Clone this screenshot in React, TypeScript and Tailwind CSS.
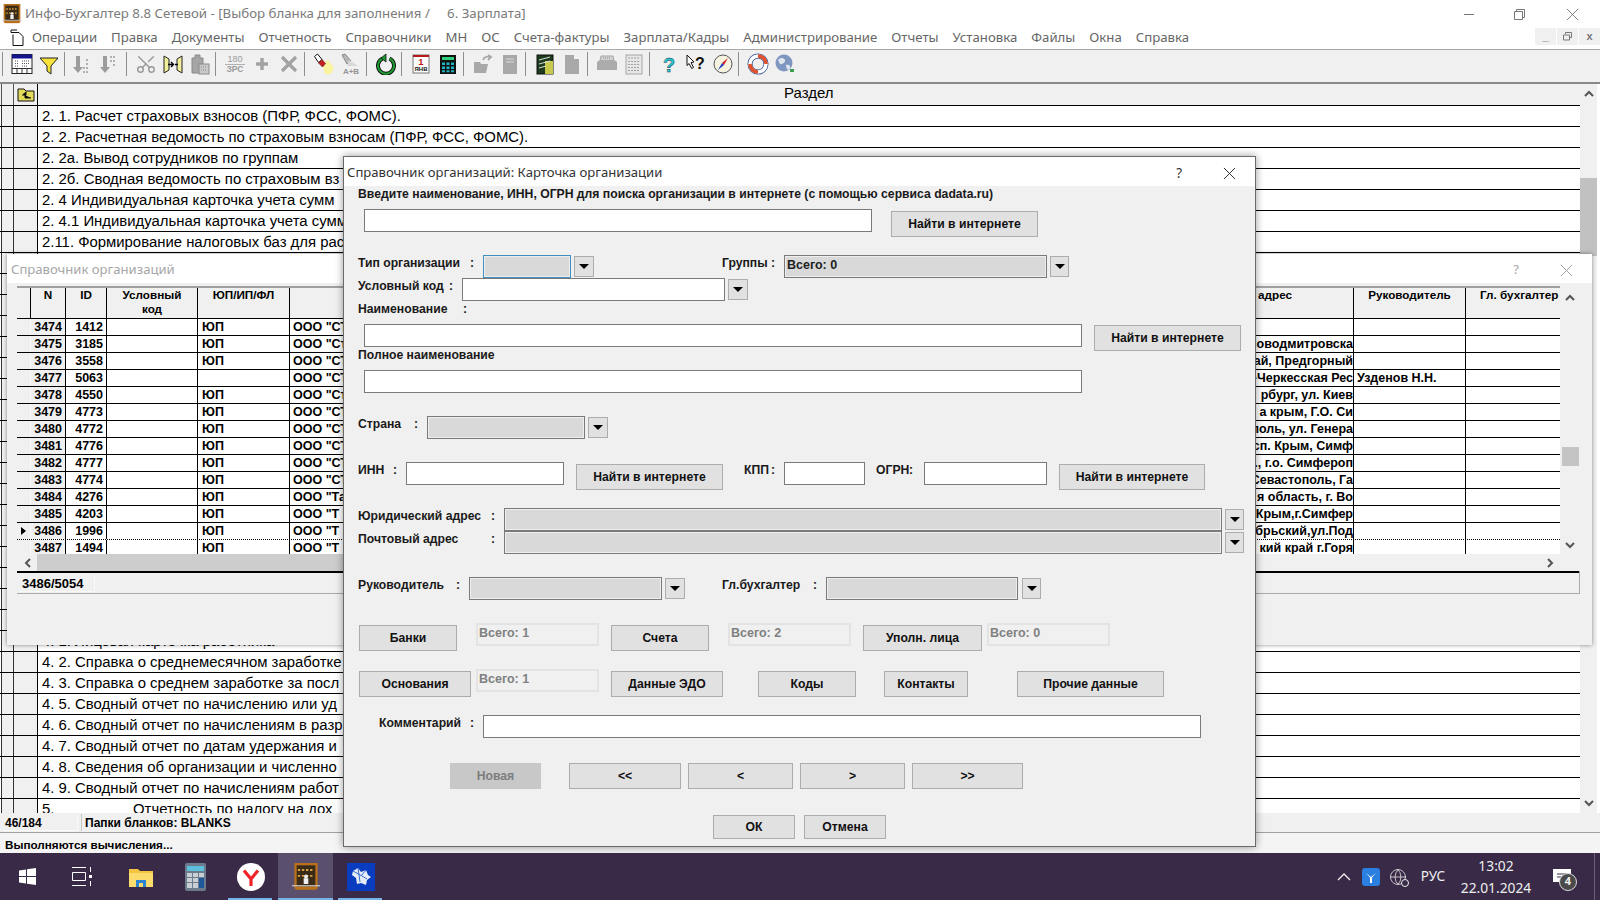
import React from "react";
import { Globe, Scissors } from "lucide-react";

type P = { c?: string; children?: React.ReactNode };

const Btn = ({ c = "", children }: P) => (
  <button className={`flex h-[26px] shrink-0 items-center justify-center border border-[#adadad] bg-[#e1e1e1] text-[12.2px] font-bold text-[#111] ${c}`}>
    {children}
  </button>
);
const Lbl = ({ c = "", children }: P) => (
  <div className={`h-[16px] shrink-0 whitespace-nowrap text-[12.2px] font-bold leading-[16px] text-[#1a1a1a] ${c}`}>{children}</div>
);
const Colon = ({ c = "w-[13px]" }: { c?: string }) => (
  <div className={`h-[16px] shrink-0 text-[12.2px] font-bold leading-[16px] text-[#1a1a1a] ${c}`}>:</div>
);
const Input = ({ c = "" }: P) => <div className={`h-[23px] shrink-0 border border-[#7a7a7a] bg-white ${c}`} />;
const Dis = ({ c = "", children }: P) => (
  <div className={`flex h-[23px] shrink-0 items-center border border-[#7a7a7a] bg-[#d9d9d9] pb-[2px] pl-[2px] text-[12.5px] font-bold text-[#222] shadow-[inset_0_0_0_1px_#eeeeee] ${c}`}>
    {children}
  </div>
);
const Drop = ({ c = "" }: P) => (
  <div className={`mt-[1px] flex h-[21px] shrink-0 items-center justify-center border border-[#adadad] bg-[#e1e1e1] ${c}`}>
    <div className="h-0 w-0 border-x-[5px] border-t-[5px] border-x-transparent border-t-black" />
  </div>
);
const Box = ({ c = "", children }: P) => (
  <div className={`h-[23px] shrink-0 border-2 border-[#e3e3e3] bg-[#f0f0f0] pl-[1px] text-[12.5px] font-bold leading-[17px] text-[#808080] ${c}`}>
    {children}
  </div>
);
const Row = ({ c = "", children }: P) => <div className={`flex h-[23px] shrink-0 items-start ${c}`}>{children}</div>;

const Sep = () => (
  <div className="flex h-[24px] w-[8px] shrink-0 pl-[2px]">
    <div className="h-full w-px bg-[#8e8e8e]" />
  </div>
);
const Ic = ({ children }: P) => (
  <div className="flex h-[24px] w-[27px] shrink-0 items-center justify-center">
    <svg width="22" height="22" viewBox="0 0 22 22">
      {children}
    </svg>
  </div>
);

const Abacus = ({ s }: { s: number }) => (
  <svg width={s} height={s} viewBox="0 0 24 24">
    <rect x="3" y="1" width="18" height="20" fill="#3a2a18" stroke="#b8701c" strokeWidth="2" />
    <path d="M5 6h14M5 11h14" stroke="#d9a040" strokeWidth="1.6" strokeDasharray="2 1.5" />
    <path d="M10 13h4v5h-4z" fill="#eeeeee" />
    <circle cx="12" cy="11.5" r="1.7" fill="#eee" />
    <path d="M0 19.5h24" stroke="#cfcfcf" strokeWidth="1" />
    <path d="M3 21h18v2H3z" fill="#b8701c" />
  </svg>
);

const tb: React.ReactNode[] = [
  <Sep key="s0" />,
  <Ic key="a">
    <rect x="1" y="1.5" width="20" height="19" fill="#fff" stroke="#222" />
    <rect x="1" y="1.5" width="20" height="4" fill="#14148c" />
    <path d="M1 15.5h20M6 15.5v5M11 15.5v5M16 15.5v5" stroke="#333" />
    <path d="M4 8h4M4 10.5h4M4 13h4M11 8h7M11 10.5h7M11 13h5" stroke="#555" strokeDasharray="1 1" />
  </Ic>,
  <Ic key="b">
    <path d="M2 5h18l-7 8v8l-4-3v-5z" fill="#f6e23a" stroke="#222" />
  </Ic>,
  <Sep key="s1" />,
  <Ic key="c">
    <g transform="translate(-5 0)">
      <path d="M8 3h4v11h3l-5 6-5-6h3z" fill="#9c9c9c" />
      <path d="M16 20v-2M19 20v-2M19 16v-2M16 16v-2M19 12v-2M19 8v-2" stroke="#9c9c9c" strokeWidth="1.5" />
    </g>
  </Ic>,
  <Ic key="d">
    <g transform="translate(-5 0)">
      <path d="M8 3h4v11h3l-5 6-5-6h3z" fill="#9c9c9c" />
      <path d="M16 3v2M19 3v2M16 7v2M19 7v2M19 11v2" stroke="#9c9c9c" strokeWidth="1.5" />
    </g>
  </Ic>,
  <Sep key="s2" />,
  <div key="e" className="flex h-[24px] w-[27px] shrink-0 items-center justify-center text-[#9a9a9a]">
    <Scissors size={22} strokeWidth={1.6} className="-rotate-90" />
  </div>,
  <Ic key="f">
    <path d="M2 3l5 3v11l-5 3z" fill="#f2ef9a" stroke="#222" />
    <path d="M20 3l-5 3v11l5 3z" fill="#f2ef9a" stroke="#222" />
    <path d="M6 11.5h5M9 9l2.5 2.5L9 14M16 11.5h-3" stroke="#000" strokeWidth="1.4" fill="none" />
  </Ic>,
  <Ic key="g">
    <path d="M3 5h3V2h5v3h3v15H3z" fill="#a5a5a5" stroke="#8a8a8a" />
    <rect x="10" y="11" width="10" height="10" fill="#c9c9c9" stroke="#8a8a8a" />
    <path d="M12 14h6M12 17h6" stroke="#8a8a8a" strokeDasharray="1 1" />
  </Ic>,
  <Sep key="s3" />,
  <Ic key="h">
    <text x="11" y="9" textAnchor="middle" fontSize="9" fill="#9a9a9a" fontFamily="Liberation Sans">180</text>
    <path d="M1 11.5h20" stroke="#b0b0b0" />
    <text x="11" y="19" textAnchor="middle" fontSize="8.5" fontWeight="700" fill="#9a9a9a" fontFamily="Liberation Sans">ЗРС</text>
  </Ic>,
  <Ic key="i">
    <path d="M11 5v12M5 11h12" stroke="#a2a2a2" strokeWidth="3.4" />
  </Ic>,
  <Ic key="j">
    <path d="M4 4l14 14M18 4L4 18" stroke="#a2a2a2" strokeWidth="3.2" />
  </Ic>,
  <Sep key="s4" />,
  <Ic key="k">
    <path d="M9 11l6-4 6 8-3 6h-6z" fill="#f8f4a0" />
    <path d="M1.5 3.5l3-2.5 4.5 5.5-3.5 3z" fill="#fff" stroke="#111" />
    <path d="M5.5 10l3.5-3.5 3.5 4-3 3.5z" fill="#c42020" stroke="#6a1010" strokeWidth=".6" />
  </Ic>,
  <Ic key="l">
    <path d="M2 2l3-1 6 7-4 3z" fill="#b8b8b8" stroke="#8a8a8a" />
    <path d="M9 7l9 6H7z" fill="#d8d8d8" />
    <text x="11" y="21" textAnchor="middle" fontSize="8" fontWeight="700" fill="#949494" fontFamily="Liberation Sans">A+B</text>
  </Ic>,
  <Sep key="s5" />,
  <Ic key="m">
    <path d="M7.5 5.5a8 8 0 1 0 7 0" fill="none" stroke="#111" strokeWidth="4" />
    <path d="M7.5 5.5a8 8 0 1 0 7 0" fill="none" stroke="#1e9a32" strokeWidth="2" />
    <path d="M11 1v8L6 5z" fill="#1e9a32" stroke="#111" strokeWidth=".8" />
  </Ic>,
  <Sep key="s6" />,
  <Ic key="n">
    <rect x="3" y="2" width="16" height="18" fill="#fff" stroke="#777" />
    <rect x="3" y="2" width="16" height="2" fill="#b81818" />
    <text x="11" y="12" textAnchor="middle" fontSize="9.5" fontWeight="700" fill="#c01818" fontFamily="Liberation Sans">1</text>
    <text x="11" y="18" textAnchor="middle" fontSize="6" fontWeight="700" fill="#111" fontFamily="Liberation Sans">ЯНВ</text>
  </Ic>,
  <Ic key="o">
    <rect x="3" y="2" width="16" height="19" fill="#111" />
    <rect x="5" y="4" width="12" height="3" fill="#2ad07a" />
    <path d="M5 9.5h3v2.5H5zM9.5 9.5h3v2.5h-3zM14 9.5h3v2.5h-3zM5 13.5h3V16H5zM9.5 13.5h3V16h-3zM14 13.5h3V16h-3zM5 17.2h3v2H5zM9.5 17.2h3v2h-3zM14 17.2h3v2h-3z" fill="#1fb6c4" />
  </Ic>,
  <Sep key="s7" />,
  <Ic key="p">
    <path d="M2 9h6l1 2h7l-2 9H2z" fill="#a8a8a8" />
    <path d="M11 7c1-3 4-4 7-3M16 2l3 2-3 3" fill="none" stroke="#a8a8a8" strokeWidth="1.8" />
  </Ic>,
  <Ic key="q">
    <path d="M4 2h14v19H4z" fill="#a8a8a8" />
    <path d="M7 6h8M7 9h8" stroke="#dcdcdc" strokeWidth="1.2" />
  </Ic>,
  <Sep key="s8" />,
  <Ic key="r">
    <rect x="3" y="2" width="16" height="19" fill="#1c3a1c" stroke="#111" />
    <path d="M11 8h8v13h-8z" fill="#c8c84a" />
    <path d="M5 7l11-3M5 11l11-3M5 15l7-2" stroke="#ddd" strokeWidth="1" />
  </Ic>,
  <Ic key="s">
    <path d="M4 2h9v4h5v15H4z" fill="#a8a8a8" />
  </Ic>,
  <Sep key="s9" />,
  <Ic key="t">
    <path d="M5 3h12l1 5H4z" fill="#d2d2d2" stroke="#a6a6a6" />
    <path d="M1 9l3-2h14l3 2v8H1z" fill="#ababab" />
    <path d="M7 5h8" stroke="#8f8f8f" strokeDasharray="1 1" />
  </Ic>,
  <Ic key="u">
    <rect x="3" y="2" width="16" height="19" fill="#e6e6e6" stroke="#a6a6a6" />
    <path d="M5 5h12M5 8.5h12M5 11.5h12M5 14.5h12M5 17.5h12" stroke="#a2a2a2" strokeDasharray="2 1" />
  </Ic>,
  <Sep key="s10" />,
  <Ic key="v">
    <text x="11" y="19" textAnchor="middle" fontSize="20" fontWeight="700" fill="#2cc4d0" stroke="#134" strokeWidth=".4" fontFamily="Liberation Sans">?</text>
  </Ic>,
  <Ic key="w">
    <path d="M2 2l7 7-3 .5 2.5 5-1.8 1-2.6-5L2 12.5z" fill="#fff" stroke="#111" />
    <text x="15" y="16" textAnchor="middle" fontSize="16" fontWeight="700" fill="#111" fontFamily="Liberation Sans">?</text>
  </Ic>,
  <Ic key="x">
    <circle cx="11" cy="11" r="9" fill="#f5f2e0" stroke="#555" />
    <path d="M16 5l-4 7-2-2z" fill="#d02020" />
    <path d="M6 17l4-7 2 2z" fill="#2040c0" />
  </Ic>,
  <Sep key="s11" />,
  <Ic key="y">
    <circle cx="11" cy="11" r="8" fill="none" stroke="#2b4a90" strokeWidth="5" />
    <circle cx="11" cy="11" r="8" fill="none" stroke="#fff" strokeWidth="3.6" />
    <path d="M11 3a8 8 0 0 1 8 8M11 19a8 8 0 0 1-8-8" fill="none" stroke="#e0502a" strokeWidth="3.6" />
  </Ic>,
  <Ic key="z">
    <circle cx="10" cy="10" r="8.5" fill="#7f96c0" />
    <path d="M4 7c3-3 6-2 7 0s-3 5-5 4zM12 12c2-1 5 0 4 3s-4 2-4-3z" fill="#dfe5ee" />
    <path d="M16 16h4v3h-4z" fill="#3aa050" />
  </Ic>,
];

const menu = ["Операции", "Правка", "Документы", "Отчетность", "Справочники", "МН", "ОС", "Счета-фактуры", "Зарплата/Кадры", "Администрирование", "Отчеты", "Установка", "Файлы", "Окна", "Справка"];

const mainRows: { [k: number]: string } = {
  0: "2. 1. Расчет страховых взносов (ПФР, ФСС, ФОМС).",
  1: "2. 2. Расчетная ведомость по страховым взносам (ПФР, ФСС, ФОМС).",
  2: "2. 2а. Вывод сотрудников по группам",
  3: "2. 2б. Сводная ведомость по страховым вз",
  4: "2. 4 Индивидуальная карточка учета сумм",
  5: "2. 4.1 Индивидуальная карточка учета сумм",
  6: "2.11. Формирование налоговых баз для рас",
  25: "4. 1. Лицевая карточка работника",
  26: "4. 2. Справка о среднемесячном заработке",
  27: "4. 3. Справка о среднем заработке за посл",
  28: "4. 5. Сводный отчет по начислению или уд",
  29: "4. 6. Сводный отчет по начислениям в разр",
  30: "4. 7. Сводный отчет по датам удержания и",
  31: "4. 8. Сведения об организации и численно",
  32: "4. 9. Сводный отчет по начислениям работ",
};

const org = [
  ["3474", "1412", "ЮП", 'ООО "СТ', "", ""],
  ["3475", "3185", "ЮП", 'ООО "Ст', "Новодмитровска", ""],
  ["3476", "3558", "ЮП", 'ООО "СТ', "ай, Предгорный", ""],
  ["3477", "5063", "", 'ООО "СТ', "-Черкесская Рес", "Узденов Н.Н."],
  ["3478", "4550", "ЮП", 'ООО "Ст', "рбург, ул. Киев", ""],
  ["3479", "4773", "ЮП", 'ООО "СТ', "а крым, Г.О. Си", ""],
  ["3480", "4772", "ЮП", 'ООО "СТ', "поль, ул. Генера", ""],
  ["3481", "4776", "ЮП", 'ООО "СТ', "сп. Крым, Симф", ""],
  ["3482", "4777", "ЮП", 'ООО "СТ', "., г.о. Симфероп", ""],
  ["3483", "4774", "ЮП", 'ООО "СТ', "Севастополь, Га", ""],
  ["3484", "4276", "ЮП", 'ООО "Та', "я область, г. Во", ""],
  ["3485", "4203", "ЮП", 'ООО "Т', "Крым,г.Симфер", ""],
  ["3486", "1996", "ЮП", 'ООО "Т', "ябрьский,ул.Под", ""],
  ["3487", "1494", "ЮП", 'ООО "Т', "кий край г.Горя", ""],
];

const cols = "grid grid-cols-[14px_35px_41px_91px_92px_510px_554px_112px_94px]";

const X = ({ s = 14, w = 1, col = "#777" }: { s?: number; w?: number; col?: string }) => (
  <svg width={s} height={s} viewBox="0 0 14 14">
    <path d="M1 1l12 12M13 1L1 13" stroke={col} strokeWidth={w} />
  </svg>
);
const Chev = ({ up }: { up?: boolean }) => (
  <svg width="10" height="7" viewBox="0 0 10 7">
    <path d={up ? "M1 6l4-4 4 4" : "M1 1l4 4 4-4"} fill="none" stroke="#555" strokeWidth="2" />
  </svg>
);

export default function App() {
  return (
    <div className="relative flex h-[900px] w-[1600px] flex-col overflow-hidden bg-white font-['Liberation_Sans',sans-serif] text-black">
      {/* title bar */}
      <div className="flex h-[28px] shrink-0 items-center bg-white pl-[2px] pr-[21px] font-['Noto_Sans',sans-serif] text-[13.25px] text-[#7b7b7b]">
        <Abacus s={20} />
        <span className="ml-[3px] whitespace-pre">Инфо-Бухгалтер 8.8 Сетевой - [Выбор бланка для заполнения /     6. Зарплата]</span>
        <div className="ml-auto flex items-center">
          <div className="h-px w-[10px] bg-[#777]" />
          <svg width="11" height="11" viewBox="0 0 11 11" className="ml-[40px]">
            <path d="M2.5 2.5V.5h8v8h-2M.5 2.5h8v8h-8z" fill="none" stroke="#777" />
          </svg>
          <div className="ml-[41px]">
            <X s={13} />
          </div>
        </div>
      </div>
      {/* menu */}
      <div className="flex h-[22px] shrink-0 items-start border-b border-[#a8a8a8] bg-white">
        <svg width="14" height="17" viewBox="0 0 14 17" className="ml-[10px] mt-[1px]">
          <path d="M1 3.5h8l4 4v9H3V5.5" fill="#fff" stroke="#111" />
          <path d="M1 3.5V1h6" fill="none" stroke="#111" />
        </svg>
        <div className="ml-[8px] flex gap-[14px] font-['Noto_Sans',sans-serif] text-[13.2px] leading-[19px] text-[#666]">
          {menu.map((m) => (
            <span key={m}>{m}</span>
          ))}
        </div>
        <div className="ml-auto flex">
          {["_", "", "x"].map((g, i) => (
            <div key={i} className="ml-px flex h-[17px] w-[21px] items-center justify-center bg-[#f0f0f0] text-[11px] font-bold leading-none text-[#777]">
              {i === 1 ? (
                <svg width="9" height="9" viewBox="0 0 9 9">
                  <path d="M2.5 2V.5h6v5H7M.5 3h6v5h-6z" fill="none" stroke="#777" />
                </svg>
              ) : (
                g
              )}
            </div>
          ))}
        </div>
      </div>
      {/* toolbar */}
      <div className="flex h-[34px] shrink-0 items-start border-b-2 border-[#8a8a8a] bg-[#f0f0f0] pt-[2px]">{tb}</div>
      {/* main table */}
      <div className="flex min-h-0 flex-1">
        <div className="flex w-[1580px] shrink-0 flex-col overflow-hidden">
          <div className="flex h-[22px] shrink-0 border-b border-black bg-[#f0f0f0]">
            <div className="ml-[1px] w-[13px] shrink-0 border-x border-[#555]" />
            <div className="flex w-[24px] shrink-0 items-center justify-center border-r border-black">
              <svg width="18" height="15" viewBox="0 0 18 15">
                <path d="M1 14V2h6l2 2h8v10z" fill="#e2da5a" stroke="#111" />
                <path d="M9 5L5.5 8 9 8zM8 8v3h6" fill="#111" stroke="#111" />
              </svg>
            </div>
            <div className="flex-1 pl-[746px] text-[15px] leading-[17px]">Раздел</div>
          </div>
          {Array.from({ length: 34 }, (_, i) => (
            <div key={i} className="flex h-[21px] shrink-0 border-b border-black bg-white">
              <div className="ml-[1px] w-[13px] shrink-0 border-x border-[#333] bg-[#f0f0f0]" />
              <div className="w-[24px] shrink-0 border-r border-black bg-[#f0f0f0]" />
              {i === 33 ? (
                <div className="flex whitespace-nowrap text-[14.9px] leading-[20px]">
                  <span className="w-[95px] shrink-0 pl-[4px]">5.</span>
                  <span>Отчетность по налогу на дох</span>
                </div>
              ) : (
                <div className="whitespace-nowrap pl-[4px] text-[14.9px] leading-[20px]">{mainRows[i] ?? ""}</div>
              )}
            </div>
          ))}
        </div>
        <div className="flex w-[17px] shrink-0 flex-col items-center bg-[#f0f0f0] pb-[6px]">
          <div className="mt-[6px]">
            <Chev up />
          </div>
          <div className="mt-[81px] h-[78px] w-full bg-[#c1c1c1]" />
          <div className="mt-auto">
            <Chev />
          </div>
        </div>
      </div>
      {/* status */}
      <div className="flex h-[20px] shrink-0 items-end border-b border-[#a0a0a0] bg-[#f0f0f0] pb-[1px] text-[12px] font-bold">
        <div className="ml-[4px] h-[17px] w-[74px] border-b border-r border-[#fafafa] pl-[1px] leading-[19px]">46/184</div>
        <div className="ml-[3px] h-[17px] flex-1 border-l border-[#c8c8c8] pl-[3px] leading-[19px]">Папки бланков: BLANKS</div>
      </div>
      <div className="flex h-[20px] shrink-0 items-center bg-[#f4f4f4] pl-[5px] pt-[3px] text-[11.7px] font-bold">Выполняются вычисления...</div>
      {/* taskbar */}
      <div className="flex h-[47px] shrink-0 items-center bg-[#392b47] font-['Noto_Sans',sans-serif] text-[#eeeeee]">
        <div className="flex h-full w-[55px] items-center justify-center">
          <svg width="17" height="17" viewBox="0 0 17 17">
            <path d="M0 2.5l7-1v6.5H0zM8 1.3L17 0v8H8zM0 9h7v6.5l-7-1zM8 9h9v8l-9-1.3z" fill="#fff" />
          </svg>
        </div>
        <div className="flex h-full w-[55px] items-center justify-center">
          <svg width="21" height="19" viewBox="0 0 21 19">
            <path d="M0 .5h14M0 18.5h14M.5 5.5h13v8H.5zM18.5 0v5M18.5 14v5" fill="none" stroke="#fff" />
            <rect x="17" y="8" width="3" height="3" fill="#fff" />
          </svg>
        </div>
        <div className="ml-[3px] flex h-full w-[55px] items-center justify-center">
          <svg width="26" height="22" viewBox="0 0 26 22">
            <path d="M1 3h9l2 2h13v16H1z" fill="#f4c33f" />
            <path d="M1 7h24v14H1z" fill="#fadb6c" />
            <path d="M8 21v-7h10v7h-3v-4h-4v4z" fill="#2a84d2" />
          </svg>
        </div>
        <div className="flex h-full w-[55px] items-center justify-center">
          <svg width="21" height="28" viewBox="0 0 21 28">
            <rect width="21" height="28" rx="2" fill="#6c7c8c" />
            <rect x="2" y="3" width="17" height="5" fill="#5cc0dc" />
            <path d="M2 10h5v4H2zM8 10h5v4H8zM2 15h5v4H2zM8 15h5v4H8zM2 20h5v5H2zM8 20h5v5H8z" fill="#c8d0d6" />
            <path d="M14 10h5v4h-5z" fill="#c8d0d6" />
            <path d="M14 15h5v10h-5z" fill="#1e5a9a" />
          </svg>
        </div>
        <div className="relative flex h-full w-[55px] items-center justify-center">
          <svg width="28" height="28" viewBox="0 0 28 28">
            <circle cx="14" cy="14" r="14" fill="#fff" />
            <path d="M7 7.5l7 8.5 7-8.5M14 16v7" fill="none" stroke="#f0232a" strokeWidth="3.2" />
          </svg>
          <div className="absolute bottom-0 left-[5px] h-[2px] w-[44px] bg-[#76b5e8]" />
        </div>
        <div className="relative flex h-full w-[55px] items-center justify-center bg-[#5a4f6c]">
          <Abacus s={28} />
          <div className="absolute bottom-0 left-0 h-[2px] w-full bg-[#76b5e8]" />
        </div>
        <div className="relative flex h-full w-[55px] items-center justify-center">
          <svg width="28" height="28" viewBox="0 0 28 28">
            <rect width="28" height="28" fill="#0a3cc0" />
            <path d="M6 8l5-3 3 4 5-2 2 5 3 2-4 3-1 5-5-2-4 1-1-6-4-3z" fill="#e4ecf8" />
            <path d="M11 5l2 14M6 8l9 5 5 3M19 7l-5 6" stroke="#3a6ad0" fill="none" />
          </svg>
          <div className="absolute bottom-0 left-[5px] h-[2px] w-[44px] bg-[#76b5e8]" />
        </div>
        <div className="ml-auto flex h-full items-center">
          <div className="flex w-[27px] justify-center">
            <svg width="14" height="8" viewBox="0 0 14 8">
              <path d="M1 7l6-6 6 6" fill="none" stroke="#eee" strokeWidth="1.3" />
            </svg>
          </div>
          <div className="flex w-[27px] justify-center">
            <svg width="18" height="18" viewBox="0 0 18 18">
              <rect width="18" height="18" rx="3" fill="#2a7fe0" />
              <path d="M4 5l5 4 5-4-4 4.5V15H8V9.5z" fill="#fff" />
            </svg>
          </div>
          <div className="relative flex w-[27px] justify-center">
            <Globe size={18} strokeWidth={1} />
            <div className="absolute bottom-[-1px] right-[2px] h-[8px] w-[8px] rounded-full border border-[#eee] bg-[#392b47]" />
          </div>
          <div className="ml-[4px] w-[36px] text-center text-[13.5px]">РУС</div>
          <div className="ml-[4px] flex w-[82px] flex-col items-center text-[13.8px] leading-[22px]">
            <span>13:02</span>
            <span>22.01.2024</span>
          </div>
          <div className="relative ml-[13px] flex w-[24px] justify-center">
            <svg width="18" height="16" viewBox="0 0 18 16">
              <path d="M0 0h18v13H0z" fill="#fff" />
              <path d="M4 5h10M4 8h10" stroke="#392b47" />
            </svg>
            <div className="absolute left-[9px] top-[4px] flex h-[18px] w-[18px] items-center justify-center rounded-full border border-[#ddd] bg-[#4a4a4a] text-[11px] font-bold">4</div>
          </div>
          <div className="ml-[20px] mr-[5px] h-full w-px bg-[#6a5f78]" />
        </div>
      </div>

      {/* back window */}
      <div className="absolute left-[7px] top-[254px] flex h-[391px] w-[1585px] flex-col bg-[#f0f0f0] shadow-[0_0_4px_rgba(0,0,0,0.45)]">
        <div className="flex h-[29px] shrink-0 items-center bg-white pl-[4px] pr-[19px] pt-[3px] font-['Noto_Sans',sans-serif] text-[13.1px] text-[#a6a6a6]">
          <span>Справочник организаций</span>
          <span className="ml-auto text-[13px]">?</span>
          <div className="ml-[41px]">
            <X s={13} col="#999" />
          </div>
        </div>
        <div className="ml-[10px] mt-[3px] flex h-[308px] w-[1563px] flex-col border-b border-r border-[#aaa]">
          <div className="flex h-[287px] border-b-2 border-black">
            <div className="flex w-[1543px] shrink-0 flex-col text-[12.5px] font-bold">
              <div className={`${cols} h-[33px] shrink-0 border-b border-black border-t-2 border-t-[#a0a0a0] bg-[#f0f0f0] text-[11.7px] leading-[14px]`}>
                <div className="border-r border-black" />
                <div className="border-r border-black text-center">N</div>
                <div className="border-r border-black text-center">ID</div>
                <div className="border-r border-black text-center">
                  Условный
                  <br />
                  код
                </div>
                <div className="border-r border-black text-center">ЮП/ИП/ФЛ</div>
                <div />
                <div className="border-r border-black pr-[61px] text-right">адрес</div>
                <div className="border-r border-black text-center">Руководитель</div>
                <div className="whitespace-nowrap pl-[14px]">Гл. бухгалтер</div>
              </div>
              <div className="h-[236px] overflow-hidden bg-white">
                {org.map((r) => {
                  const foc = r[0] === "3486";
                  return (
                    <div key={r[0]} className={`${cols} h-[17px] border-b leading-[16px] ${foc ? "border-dotted border-black" : "border-black"}`}>
                      <div className="flex items-center justify-center border-r border-[#f8f8f8] bg-[#f0f0f0]">
                        {foc && <div className="h-0 w-0 border-y-[4px] border-l-[5px] border-y-transparent border-l-black" />}
                      </div>
                      <div className="border-r border-black bg-[#f0f0f0] pr-[3px] text-right">{r[0]}</div>
                      <div className="border-r border-black pr-[3px] text-right">{r[1]}</div>
                      <div className="border-r border-black" />
                      <div className="border-r border-black pl-[4px]">{r[2]}</div>
                      <div className="whitespace-nowrap pl-[3px]">{r[3]}</div>
                      <div className="flex justify-end whitespace-nowrap border-r border-black">{r[4]}</div>
                      <div className="whitespace-nowrap border-r border-black pl-[3px]">{r[5]}</div>
                      <div />
                    </div>
                  );
                })}
              </div>
              <div className="flex h-[17px] items-center bg-[#f0f0f0]">
                <div className="flex w-[20px] justify-center">
                  <svg width="7" height="10" viewBox="0 0 7 10">
                    <path d="M6 1L2 5l4 4" fill="none" stroke="#555" strokeWidth="2" />
                  </svg>
                </div>
                <div className="h-full w-[500px] bg-[#cdcdcd]" />
                <div className="ml-auto flex w-[20px] justify-center">
                  <svg width="7" height="10" viewBox="0 0 7 10">
                    <path d="M1 1l4 4-4 4" fill="none" stroke="#555" strokeWidth="2" />
                  </svg>
                </div>
              </div>
            </div>
            <div className="flex w-[20px] shrink-0 flex-col items-center bg-[#f0f0f0] pb-[22px] pt-[8px]">
              <Chev up />
              <div className="mt-[146px] h-[19px] w-[17px] bg-[#c4c4c4]" />
              <div className="mt-auto">
                <Chev />
              </div>
            </div>
          </div>
          <div className="flex flex-1 items-start pl-[3px] pt-[2px]">
            <div className="h-[17px] w-[75px] border-b border-r border-[#fafafa] pl-[2px] text-[13px] font-bold leading-[17px]">3486/5054</div>
          </div>
        </div>
      </div>

      {/* dialog */}
      <div className="absolute left-[343px] top-[156px] flex h-[691px] w-[913px] flex-col border border-[#6a6a6a] bg-[#f0f0f0] shadow-[0_0_8px_rgba(0,0,0,0.4)]">
        <div className="flex h-[29px] shrink-0 items-center bg-white pl-[3px] pr-[19px] pt-[3px] font-['Noto_Sans',sans-serif] text-[13.1px] text-[#333]">
          <span>Справочник организаций: Карточка организации</span>
          <span className="ml-auto text-[13.5px]">?</span>
          <div className="ml-[41px]">
            <X s={13} col="#222" />
          </div>
        </div>
        <Row>
          <Lbl c="ml-[14px]">Введите наименование, ИНН, ОГРН для поиска организации в интернете (с помощью сервиса dadata.ru)</Lbl>
        </Row>
        <Row>
          <Input c="ml-[20px] w-[508px]" />
          <Btn c="ml-[19px] mt-[2px] w-[147px]">Найти в интернете</Btn>
        </Row>
        <Row />
        <Row>
          <Lbl c="ml-[14px] w-[112px]">Тип организации</Lbl>
          <Colon />
          <div className="h-[23px] w-[88px] shrink-0 border border-[#3f8fc0] bg-[#d9d9d9] shadow-[inset_0_0_0_1px_#eeeeee]" />
          <Drop c="ml-[3px] w-[20px]" />
          <Lbl c="ml-[128px] w-[49px]">Группы</Lbl>
          <Colon />
          <Dis c="w-[263px]">Всего: 0</Dis>
          <Drop c="ml-[3px] w-[19px]" />
        </Row>
        <Row>
          <Lbl c="ml-[14px] w-[91px]">Условный код</Lbl>
          <Colon />
          <Input c="w-[263px]" />
          <Drop c="ml-[3px] w-[20px]" />
        </Row>
        <Row>
          <Lbl c="ml-[14px] w-[105px]">Наименование</Lbl>
          <Colon />
        </Row>
        <Row>
          <Input c="ml-[20px] w-[718px]" />
          <Btn c="ml-[12px] mt-[1px] w-[147px]">Найти в интернете</Btn>
        </Row>
        <Row>
          <Lbl c="ml-[14px]">Полное наименование</Lbl>
        </Row>
        <Row>
          <Input c="ml-[20px] w-[718px]" />
        </Row>
        <Row />
        <Row>
          <Lbl c="ml-[14px] w-[56px]">Страна</Lbl>
          <Colon />
          <Dis c="w-[158px]" />
          <Drop c="ml-[3px] w-[20px]" />
        </Row>
        <Row />
        <Row>
          <Lbl c="ml-[14px] w-[35px]">ИНН</Lbl>
          <Colon />
          <Input c="w-[158px]" />
          <Btn c="ml-[12px] mt-[2px] w-[147px]">Найти в интернете</Btn>
          <Lbl c="ml-[21px] w-[27px]">КПП</Lbl>
          <Colon />
          <Input c="w-[81px]" />
          <Lbl c="ml-[11px] w-[33px]">ОГРН</Lbl>
          <Colon c="w-[15px]" />
          <Input c="w-[123px]" />
          <Btn c="ml-[12px] mt-[2px] w-[146px]">Найти в интернете</Btn>
        </Row>
        <Row />
        <Row>
          <Lbl c="ml-[14px] w-[133px]">Юридический адрес</Lbl>
          <Colon />
          <Dis c="w-[718px]" />
          <Drop c="ml-[3px] w-[19px]" />
        </Row>
        <Row>
          <Lbl c="ml-[14px] w-[133px]">Почтовый адрес</Lbl>
          <Colon />
          <Dis c="w-[718px]" />
          <Drop c="ml-[3px] w-[19px]" />
        </Row>
        <Row />
        <Row>
          <Lbl c="ml-[14px] w-[98px]">Руководитель</Lbl>
          <Colon />
          <Dis c="w-[193px]" />
          <Drop c="ml-[3px] w-[20px]" />
          <Lbl c="ml-[37px] w-[91px]">Гл.бухгалтер</Lbl>
          <Colon />
          <Dis c="w-[192px]" />
          <Drop c="ml-[4px] w-[19px]" />
        </Row>
        <Row />
        <Row>
          <Btn c="ml-[15px] mt-[2px] w-[98px]">Банки</Btn>
          <Box c="ml-[19px] w-[123px]">Всего: 1</Box>
          <Btn c="ml-[12px] mt-[2px] w-[98px]">Счета</Btn>
          <Box c="ml-[19px] w-[123px]">Всего: 2</Box>
          <Btn c="ml-[12px] mt-[2px] w-[119px]">Уполн. лица</Btn>
          <Box c="ml-[5px] w-[123px]">Всего: 0</Box>
        </Row>
        <Row />
        <Row>
          <Btn c="ml-[15px] mt-[2px] w-[112px]">Основания</Btn>
          <Box c="ml-[5px] w-[123px]">Всего: 1</Box>
          <Btn c="ml-[12px] mt-[2px] w-[112px]">Данные ЭДО</Btn>
          <Btn c="ml-[35px] mt-[2px] w-[98px]">Коды</Btn>
          <Btn c="ml-[28px] mt-[2px] w-[84px]">Контакты</Btn>
          <Btn c="ml-[49px] mt-[2px] w-[147px]">Прочие данные</Btn>
        </Row>
        <Row />
        <Row>
          <Lbl c="ml-[35px] w-[91px]">Комментарий</Lbl>
          <Colon />
          <Input c="w-[718px]" />
        </Row>
        <div className="mt-[25px] flex h-[26px] shrink-0">
          <button className="ml-[106px] flex h-[26px] w-[91px] items-center justify-center bg-[#c8c8c8] text-[12.2px] font-bold text-[#7e7e7e]">Новая</button>
          <Btn c="ml-[28px] w-[112px]">&lt;&lt;</Btn>
          <Btn c="ml-[7px] w-[105px]">&lt;</Btn>
          <Btn c="ml-[7px] w-[105px]">&gt;</Btn>
          <Btn c="ml-[7px] w-[111px]">&gt;&gt;</Btn>
        </div>
        <div className="mt-[26px] flex h-[24px] shrink-0">
          <Btn c="ml-[369px] !h-[24px] w-[82px]">ОК</Btn>
          <Btn c="ml-[9px] !h-[24px] w-[82px]">Отмена</Btn>
        </div>
      </div>
    </div>
  );
}
